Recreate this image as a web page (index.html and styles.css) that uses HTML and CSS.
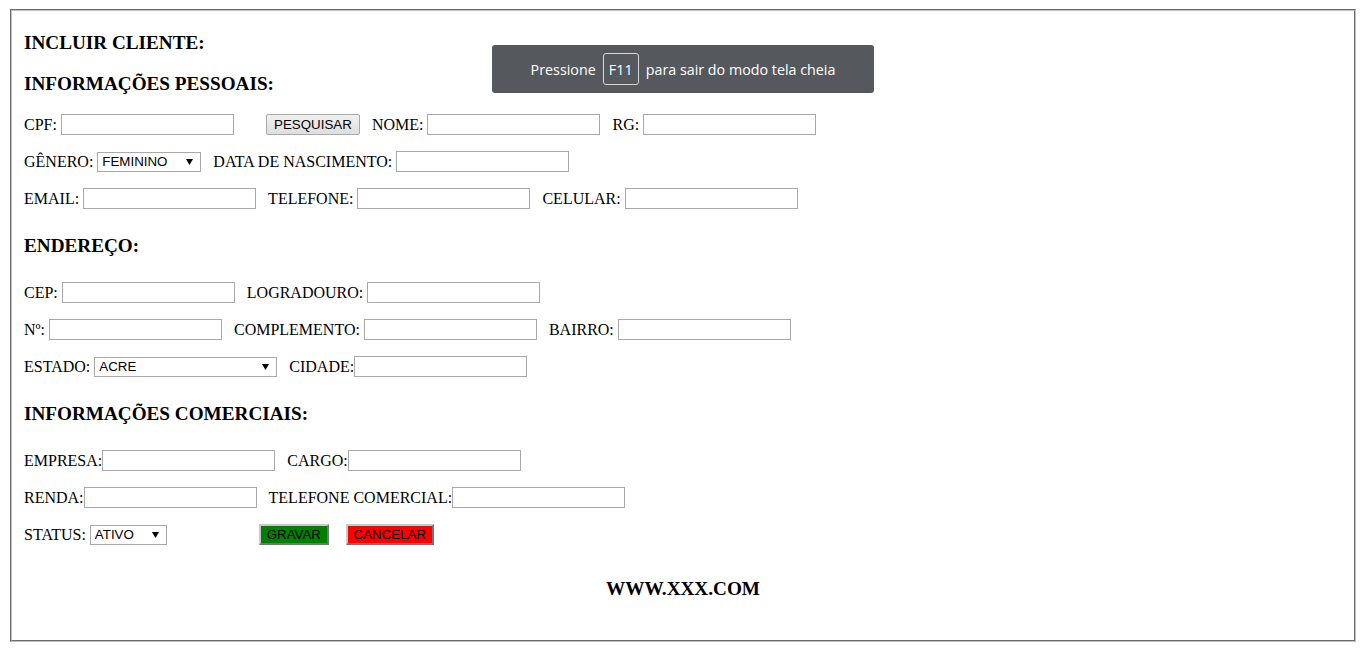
FILE: index.html
```html
<!DOCTYPE html>
<html lang="pt-BR">
<head>
<meta charset="utf-8">
<title>Incluir Cliente</title>
<link rel="stylesheet" href="styles.css">
</head>
<body>
<form class="frame">
  <h3 class="title t-first">INCLUIR CLIENTE:</h3>
  <h3 class="title t-second">INFORMAÇÕES PESSOAIS:</h3>

  <div class="row">
    <span class="lbl sp">CPF:</span><input class="txt" type="text">
    <button type="button" class="btn btn-search">PESQUISAR</button>
    <span class="lbl sp gap">NOME:</span><input class="txt" type="text">
    <span class="lbl sp gap">RG:</span><input class="txt" type="text">
  </div>
  <div class="row">
    <span class="lbl sp">GÊNERO:</span>
    <span class="sel sel-genero"><select><option>FEMININO</option><option>MASCULINO</option></select><svg class="arr" width="7" height="6" viewBox="0 0 7 6"><path d="M0 0H7L3.5 6Z" fill="#000"/></svg></span>
    <span class="lbl sp gap">DATA DE NASCIMENTO:</span><input class="txt" type="text">
  </div>
  <div class="row">
    <span class="lbl sp">EMAIL:</span><input class="txt" type="text">
    <span class="lbl sp gap">TELEFONE:</span><input class="txt" type="text">
    <span class="lbl sp gap">CELULAR:</span><input class="txt" type="text">
  </div>

  <h3 class="title t-mid">ENDEREÇO:</h3>

  <div class="row">
    <span class="lbl sp">CEP:</span><input class="txt" type="text">
    <span class="lbl sp gap">LOGRADOURO:</span><input class="txt" type="text">
  </div>
  <div class="row">
    <span class="lbl sp">Nº:</span><input class="txt" type="text">
    <span class="lbl sp gap">COMPLEMENTO:</span><input class="txt" type="text">
    <span class="lbl sp gap">BAIRRO:</span><input class="txt" type="text">
  </div>
  <div class="row">
    <span class="lbl sp">ESTADO:</span>
    <span class="sel sel-estado"><select><option>ACRE</option></select><svg class="arr" width="7" height="6" viewBox="0 0 7 6"><path d="M0 0H7L3.5 6Z" fill="#000"/></svg></span>
    <span class="lbl gap">CIDADE:</span><input class="txt" type="text">
  </div>

  <h3 class="title t-mid">INFORMAÇÕES COMERCIAIS:</h3>

  <div class="row">
    <span class="lbl">EMPRESA:</span><input class="txt" type="text">
    <span class="lbl gap">CARGO:</span><input class="txt" type="text">
  </div>
  <div class="row">
    <span class="lbl">RENDA:</span><input class="txt" type="text">
    <span class="lbl gap">TELEFONE COMERCIAL:</span><input class="txt" type="text">
  </div>
  <div class="row">
    <span class="lbl sp">STATUS:</span>
    <span class="sel sel-status"><select><option>ATIVO</option><option>INATIVO</option></select><svg class="arr" width="7" height="6" viewBox="0 0 7 6"><path d="M0 0H7L3.5 6Z" fill="#000"/></svg></span>
    <button type="button" class="btn-color btn-gravar">GRAVAR</button>
    <button type="button" class="btn-color btn-cancelar">CANCELAR</button>
  </div>

  <h3 class="title t-foot">WWW.XXX.COM</h3>
</form>

<div class="toast">
  <span>Pressione</span><span class="key">F11</span><span>para sair do modo tela cheia</span>
</div>
</body>
</html>
```

FILE: styles.css
```css
body {
  margin: 0;
  background: #fff;
  color: #000;
  font-family: "Liberation Serif", "Times New Roman", serif;
  font-size: 16px;
}

.frame {
  margin: 9px 0 0 10px;
  width: 1346px;
  box-sizing: border-box;
  border: 2px groove #c0c0c0;
  padding: 13px 12px 16px;
}

.title {
  margin: 0;
  font-size: 19.2px;
  font-weight: bold;
  white-space: nowrap;
}
.t-first { height: 37px; line-height: 37px; }
.t-second { height: 45px; line-height: 45px; }
.t-mid { height: 57px; line-height: 57px; }
.t-foot { height: 71px; line-height: 71px; text-align: center; }

.row {
  display: flex;
  align-items: center;
  height: 37px;
  white-space: nowrap;
}

.lbl { line-height: normal; }
.lbl.sp { margin-right: 4px; }
.lbl.gap { margin-left: 12px; }

.txt {
  box-sizing: border-box;
  width: 173px;
  height: 21px;
  margin: 0;
  padding: 1px 2px;
  border: 1px solid #a9a9a9;
  background: #fff;
  font-family: "Liberation Sans", Arial, sans-serif;
  font-size: 13.33px;
}

.sel {
  position: relative;
  display: inline-flex;
  height: 20px;
}
.sel select {
  -webkit-appearance: none;
  appearance: none;
  box-sizing: border-box;
  height: 20px;
  margin: 0;
  padding: 0 0 0 4px;
  border: 1px solid #a9a9a9;
  border-radius: 0;
  background: #fff;
  color: #000;
  font-family: "Liberation Sans", Arial, sans-serif;
  font-size: 13.33px;
}
.sel-genero select { width: 104px; }
.sel-estado select { width: 183px; }
.sel-status select { width: 77px; }
.sel .arr {
  position: absolute;
  right: 8px;
  top: 7px;
  pointer-events: none;
}

.btn {
  box-sizing: border-box;
  height: 21px;
  margin: 0;
  padding: 0 7px;
  border: 1px solid #a9a9a9;
  border-radius: 2px;
  background: linear-gradient(#f0f0f0, #dedede);
  color: #000;
  font-family: "Liberation Sans", Arial, sans-serif;
  font-size: 13.33px;
}
.btn-search { margin-left: 32px; width: 94px; }

.btn-color {
  box-sizing: border-box;
  height: 21px;
  margin: 0;
  padding: 0 5px;
  border: 2px outset #c8c8c8;
  color: #000;
  font-family: "Liberation Sans", Arial, sans-serif;
  font-size: 13.33px;
}
.btn-gravar { background: #008000; margin-left: 92px; width: 70px; }
.btn-cancelar { background: #ff0000; margin-left: 17px; width: 88px; }

.toast {
  position: fixed;
  top: 45px;
  left: 492px;
  width: 382px;
  height: 48px;
  box-sizing: border-box;
  border-radius: 3px;
  background: #55585c;
  color: #fff;
  font-family: "Open Sans", "Noto Sans", sans-serif;
  font-size: 14.3px;
  display: flex;
  align-items: center;
  justify-content: center;
  gap: 7px;
}
.toast .key {
  display: inline-flex;
  align-items: center;
  justify-content: center;
  width: 36px;
  height: 32px;
  box-sizing: border-box;
  border: 1px solid #d8d8d8;
  border-radius: 3px;
}
```
